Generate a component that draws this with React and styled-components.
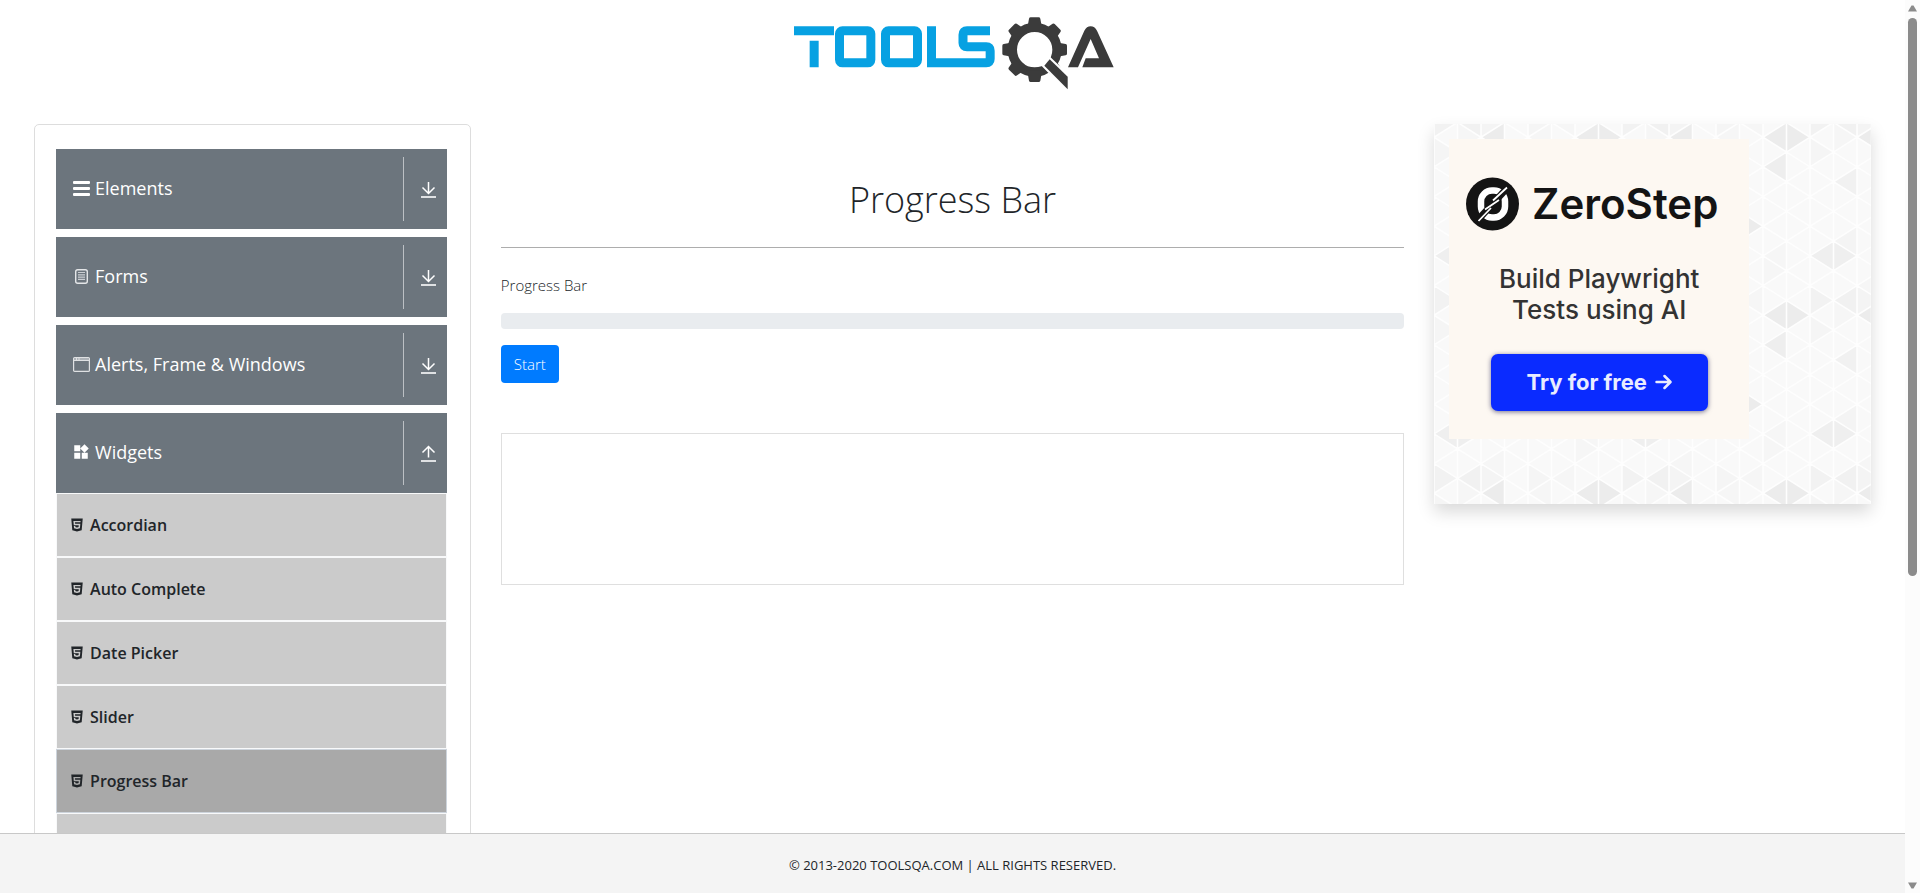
import React from "react";
import styled, { createGlobalStyle } from "styled-components";
import { MdWidgets } from "react-icons/md";
import { AiFillHtml5 } from "react-icons/ai";

const GlobalStyle = createGlobalStyle`
  *, *::before, *::after { box-sizing: border-box; }
  body {
    margin: 0;
    background: #fff;
    color: #212529;
    font-family: "Open Sans", "Noto Sans", sans-serif;
    font-size: 16px;
    font-weight: 300;
    line-height: 24px;
  }
`;

const Shell = styled.div`
  display: grid;
  grid-template-columns: minmax(0, 1fr) 15px;
  height: 100vh;
`;

const Page = styled.div`
  display: flex;
  flex-direction: column;
  min-height: 0;
`;

const Content = styled.div`
  flex: 1;
  min-height: 0;
  overflow-y: auto;
  scrollbar-width: none;
`;

const Header = styled.header`
  display: flex;
  justify-content: center;
  padding: 17px 0 34px;
`;

const HomeLink = styled.a`
  display: block;
  height: 73px;
`;

const Columns = styled.div`
  display: grid;
  grid-template-columns: 25% 50% 25%;
  width: 98%;
  margin: 0 auto;
`;

const Column = styled.div`
  padding: 0 15px;
`;

const SidePanel = styled.nav`
  border: 1px solid #ddd;
  border-radius: 5px;
  padding: 24px 23px 24px 21px;
`;

const Group = styled.section`
  margin-bottom: 8px;
`;

const GroupHeader = styled.button`
  display: flex;
  align-items: center;
  width: 100%;
  height: 80px;
  padding: 8px 8px 8px 16px;
  border: 0;
  background: #6c757d;
  color: #fff;
  font: inherit;
  font-size: 18px;
  font-weight: 400;
  text-align: left;
`;

const GroupTitle = styled.span`
  display: flex;
  flex: 1;
  align-items: center;
  gap: 5px;
  padding-bottom: 3px;
`;

const GroupArrow = styled.span`
  display: flex;
  align-items: center;
  justify-content: flex-end;
  width: 36px;
  height: 64px;
  padding-top: 2px;
  border-left: 1px solid #bcc0c4;
`;

const SubList = styled.ul`
  margin: 0;
  padding: 0;
  list-style: none;
`;

const SubItem = styled.li`
  border: 1px solid ${(p) => (p.$active ? "#cdd4dc" : "#f8f9fa")};
  background: ${(p) => (p.$active ? "#a9a9a9" : "#cbcbcb")};
`;

const SubLink = styled.a`
  display: flex;
  align-items: center;
  gap: 5px;
  height: 62px;
  padding: 0 12px;
  color: #212529;
  font-weight: 600;
  text-decoration: none;
`;

const Title = styled.h1`
  margin: 0;
  padding: 52px 0 23px;
  border-bottom: 1px solid #adadad;
  font-size: 36px;
  font-weight: 300;
  line-height: 48px;
  text-align: center;
`;

const Label = styled.div`
  margin: 25px 0 16px;
  font-size: 15px;
`;

const Track = styled.div`
  height: 16px;
  border-radius: 4px;
  background: #e9ecef;
  overflow: hidden;
`;

const Fill = styled.div`
  height: 100%;
  background: #007bff;
`;

const StartButton = styled.button`
  display: block;
  height: 38px;
  margin-top: 16px;
  padding: 0 13px;
  border: 0;
  border-radius: 4px;
  background: #007bff;
  color: #fff;
  font: inherit;
  font-size: 15px;
`;

const EmptySlot = styled.div`
  height: 152px;
  margin-top: 50px;
  border: 1px solid #dfdfdf;
`;

const Promo = styled.aside`
  position: relative;
  height: 380px;
  padding: 15px;
  box-shadow: 0 8px 16px rgba(0, 0, 0, 0.15);
`;

const PromoBackdrop = styled.svg`
  position: absolute;
  inset: 0;
  width: 100%;
  height: 100%;
`;

const PromoCard = styled.div`
  position: relative;
  display: flex;
  flex-direction: column;
  align-items: center;
  width: 300px;
  height: 300px;
  padding-top: 38px;
  background: #fdf8f2;
  font-family: Inter, sans-serif;
`;

const Brand = styled.div`
  display: flex;
  align-items: center;
  gap: 13px;
  padding-right: 14px;
  color: #141414;
  font-size: 42px;
  font-weight: 600;
  line-height: 54px;
`;

const Pitch = styled.p`
  margin: 32px 0 29px;
  color: #333;
  font-size: 26px;
  font-weight: 500;
  line-height: 31px;
  text-align: center;
`;

const TryLink = styled.a`
  display: flex;
  align-items: center;
  justify-content: center;
  gap: 8px;
  width: 217px;
  height: 57px;
  padding-bottom: 2px;
  border-radius: 7px;
  background: #0a2bff;
  box-shadow: 0 1px 5px rgba(0, 0, 60, 0.55);
  color: #e9ecff;
  font-size: 22px;
  font-weight: 700;
  text-decoration: none;
`;

const Footer = styled.footer`
  display: flex;
  align-items: center;
  justify-content: center;
  height: 60px;
  padding-top: 2px;
  border-top: 1px solid #c8c8c8;
  background: #f4f4f4;
  font-size: 13px;
  font-weight: 400;
`;

const ScrollRail = styled.div`
  display: flex;
  flex-direction: column;
  align-items: center;
  justify-content: space-between;
  padding: 5px 0 4px;
  background: #fcfcfc;
`;

const ScrollTrack = styled.div`
  flex: 1;
  width: 9px;
  margin: 6px 0;
`;

const ScrollThumb = styled.div`
  height: 65%;
  border-radius: 5px;
  background: #8b8b8b;
`;

function ToolsLogo() {
  return (
    <svg width="326" height="73" viewBox="61 50 978 219" role="img" aria-label="ToolsQA">
      <g fill="none" stroke="#07a1e2" strokeWidth="27">
        <path d="M73 91.5H193M133.500 121V201" />
        <rect x="209.500" y="91.500" width="94" height="96" rx="9" />
        <rect x="347.500" y="91.500" width="96" height="96" rx="9" />
        <path d="M661 91.500H592Q580 91.500 580 103V128Q580 139.500 592 139.500H650Q661.500 139.500 661.500 151V176Q661.500 187.500 650 187.500H485.500V78" />
      </g>
      <g fill="#3b3b3b">
        <circle cx="795" cy="148" r="67" fill="none" stroke="#3b3b3b" strokeWidth="28" />
        {[0, 45, 90, 135, 180, 225, 270, 315].map((a) => (
          <path
            key={a}
            transform={`rotate(${a} 795 148)`}
            d="M768 76L775 72L778 55Q779 51 783 51H807Q811 51 812 55L815 72L822 76V86H768Z"
          />
        ))}
        <path d="M824 196L840 177L894 229V267Z" stroke="#fff" strokeWidth="13" />
        <path d="M824 196L840 177L894 229V267Z" />
        <path d="M895 201L944 91Q951 78 963 78Q975 78 982 91L1032 201H938L948 174H988L963 116L925 201Z" />
      </g>
    </svg>
  );
}

function MenuIcon() {
  return (
    <svg width="18" height="18" viewBox="0 0 18 18" fill="#fff" aria-hidden="true">
      <rect x="1" y="2" width="17" height="3" rx="1" />
      <rect x="1" y="8" width="17" height="3" rx="1" />
      <rect x="1" y="14" width="17" height="3" rx="1" />
    </svg>
  );
}

function FormIcon() {
  return (
    <svg width="18" height="18" viewBox="0 0 18 18" fill="none" stroke="#e4e6e8" aria-hidden="true">
      <rect x="3.700" y="2.700" width="11.600" height="13.600" rx="2" strokeWidth="1.400" />
      <path d="M6 5.500H13M6 7.800H13M6 10.100H13M6 12.400H13" strokeWidth="1.200" opacity="0.800" />
    </svg>
  );
}

function WindowIcon() {
  return (
    <svg width="18" height="18" viewBox="0 0 18 18" fill="none" stroke="#dfe1e3" aria-hidden="true">
      <rect x="1.600" y="2.600" width="15.800" height="13.800" rx="1" strokeWidth="1.200" />
      <path d="M2 4H17" stroke="#aeb3b8" strokeWidth="2" />
      <path d="M2 5.500H17M4.500 3V5M7 3V5" />
    </svg>
  );
}

function DropIcon({ up }) {
  return (
    <svg width="21" height="20" viewBox="0 0 21 20" fill="none" stroke="#fff" strokeWidth="1.500" aria-hidden="true">
      <path d={up ? "M10.500 13.500V2.500M4.500 8.500L10.500 2.500L16.500 8.500" : "M10.500 2V13M4.500 7.500L10.500 13.500L16.500 7.500"} />
      <path d="M3 17H18" stroke="#dfe1e3" strokeWidth="2" />
    </svg>
  );
}

function ZeroStepMark() {
  return (
    <svg width="53" height="54" viewBox="0 0 53 54" aria-hidden="true">
      <circle cx="26.500" cy="27" r="26.500" fill="#141414" />
      <rect x="15" y="13.500" width="24" height="27" rx="11" fill="none" stroke="#fff" strokeWidth="6.500" />
      <path d="M10 45L43 9" stroke="#141414" strokeWidth="7" />
      <path d="M12.500 44L25 31M27 23.500L41 10.500M19 32.500L33 23" stroke="#fff" strokeWidth="1.800" />
    </svg>
  );
}

const COL = 23.5;
const SIDE = 178 / 6;

// Vertical grid line, row along it, side the tip points to, shade.
const SHADES = [
  [7, 0, -1, "#ececec"], [7, 0, 1, "#ececec"], [3, 0, -1, "#ececec"],
  [7, 1, -1, "#eeeeee"], [2, 1, -1, "#f1f1f1"], [5, 3, 1, "#ececec"],
  [1, 4, -1, "#efefef"], [1, 4, 1, "#efefef"], [0, 5, 1, "#f2f2f2"],
  [2, 5, -1, "#f1f1f1"], [2, 5, 1, "#f4f4f4"], [2, 3, -1, "#f4f4f4"],
  [3, 5, -1, "#f6f6f6"], [6, 5, -1, "#f6f6f6"], [4, 5, 1, "#f5f5f5"],
  [1, 0, 1, "#f6f6f6"], [5, 0, -1, "#f6f6f6"], [6, 4, 1, "#f6f6f6"],
  [0, 0, 1, "#f5f5f5"], [7, 4, -1, "#f6f6f6"],
];

function rowY(line, row) {
  return -1.6 + row * SIDE + (line % 2 === 0 ? SIDE / 2 : 0);
}

function triangle(line, row, dir) {
  const x = line * COL;
  const y = rowY(line, row);
  return `M${x} ${y}V${y + SIDE}L${x + dir * COL} ${y + SIDE / 2}Z`;
}

function TrianglePattern() {
  const mesh = [];
  for (let line = 0; line <= 8; line += 1) {
    mesh.push(`M${line * COL} -30V208`);
    for (let row = -1; row <= 6; row += 1) {
      const x = line * COL;
      const y = rowY(line, row);
      mesh.push(`M${x - COL} ${y - SIDE / 2}L${x} ${y}L${x - COL} ${y + SIDE / 2}`);
    }
  }
  return (
    <PromoBackdrop aria-hidden="true">
      <defs>
        <pattern id="mesh" width="188" height="178" patternUnits="userSpaceOnUse">
          <rect width="188" height="178" fill="#f9f9f9" />
          {SHADES.map(([line, row, dir, fill]) => (
            <g key={`${line}-${row}-${dir}`} fill={fill}>
              <path d={triangle(line, row, dir)} />
              <path d={triangle(line, row, dir)} transform="translate(0 -178)" />
              <path d={triangle(line, row, dir)} transform="translate(188 0)" />
            </g>
          ))}
          <path d={mesh.join("")} fill="none" stroke="#fefefe" strokeWidth="1.600" />
        </pattern>
      </defs>
      <rect width="100%" height="100%" fill="url(#mesh)" />
    </PromoBackdrop>
  );
}

const GROUPS = [
  { title: "Elements", icon: <MenuIcon /> },
  { title: "Forms", icon: <FormIcon /> },
  { title: "Alerts, Frame & Windows", icon: <WindowIcon /> },
  {
    title: "Widgets",
    icon: <MdWidgets size={18} aria-hidden="true" />,
    items: ["Accordian", "Auto Complete", "Date Picker", "Slider", "Progress Bar", "Tool Tips"],
  },
];

function ScrollArrow({ down }) {
  return (
    <svg width="9" height="7" viewBox="0 0 9 7" fill="#8b8b8b" aria-hidden="true">
      <path d={down ? "M0 0.500H9L5.500 6.500H3.500Z" : "M0 6.500H9L5.500 0.500H3.500Z"} />
    </svg>
  );
}

export default function App() {
  const progress = 0;
  return (
    <>
      <GlobalStyle />
      <Shell>
        <Page>
          <Content>
            <Header>
              <HomeLink href="#home">
                <ToolsLogo />
              </HomeLink>
            </Header>
            <Columns>
              <Column>
                <SidePanel>
                  {GROUPS.map((group) => (
                    <Group key={group.title}>
                      <GroupHeader type="button" aria-expanded={Boolean(group.items)}>
                        <GroupTitle>
                          {group.icon}
                          {group.title}
                        </GroupTitle>
                        <GroupArrow>
                          <DropIcon up={Boolean(group.items)} />
                        </GroupArrow>
                      </GroupHeader>
                      {group.items && (
                        <SubList>
                          {group.items.map((item) => (
                            <SubItem key={item} $active={item === "Progress Bar"}>
                              <SubLink href="#widgets">
                                <AiFillHtml5 size={16} aria-hidden="true" />
                                {item}
                              </SubLink>
                            </SubItem>
                          ))}
                        </SubList>
                      )}
                    </Group>
                  ))}
                </SidePanel>
              </Column>
              <Column as="main">
                <Title>Progress Bar</Title>
                <Label id="progress-label">Progress Bar</Label>
                <Track
                  role="progressbar"
                  aria-labelledby="progress-label"
                  aria-valuemin={0}
                  aria-valuemax={100}
                  aria-valuenow={progress}
                >
                  <Fill style={{ width: `${progress}%` }} />
                </Track>
                <StartButton type="button">Start</StartButton>
                <EmptySlot />
              </Column>
              <Column>
                <Promo>
                  <TrianglePattern />
                  <PromoCard>
                    <Brand>
                      <ZeroStepMark />
                      ZeroStep
                    </Brand>
                    <Pitch>
                      Build Playwright
                      <br />
                      Tests using AI
                    </Pitch>
                    <TryLink href="#zerostep">
                      Try for free
                      <svg width="17" height="16" viewBox="0 0 17 16" fill="none" stroke="currentColor" strokeWidth="2.500" strokeLinecap="round" strokeLinejoin="round" aria-hidden="true">
                        <path d="M1.500 8H15M9.500 2L15.500 8L9.500 14" />
                      </svg>
                    </TryLink>
                  </PromoCard>
                </Promo>
              </Column>
            </Columns>
          </Content>
          <Footer>© 2013-2020 TOOLSQA.COM | ALL RIGHTS RESERVED.</Footer>
        </Page>
        <ScrollRail aria-hidden="true">
          <ScrollArrow />
          <ScrollTrack>
            <ScrollThumb />
          </ScrollTrack>
          <ScrollArrow down />
        </ScrollRail>
      </Shell>
    </>
  );
}
